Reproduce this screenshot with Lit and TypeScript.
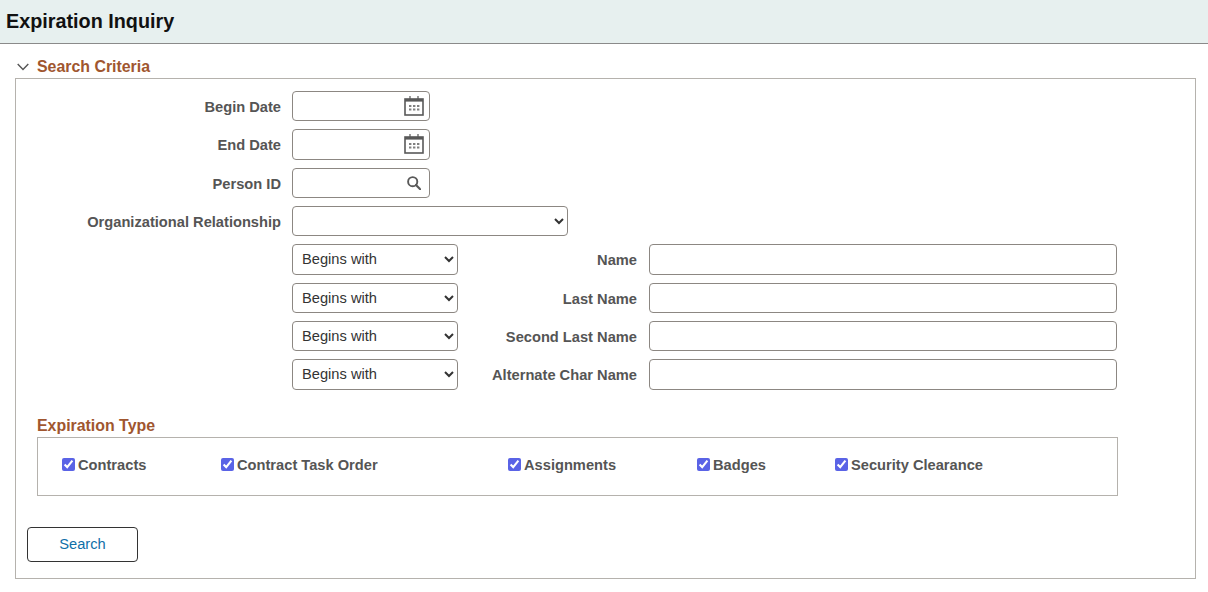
import { LitElement, html, css, svg } from 'lit';
import { customElement } from 'lit/decorators.js';

const calendarIcon = html`<svg class="icon" width="20" height="20" viewBox="0 0 20 20">
  <rect x="1" y="3" width="18" height="16" fill="none" stroke="#595959" stroke-width="1.6"></rect>
  <rect x="1" y="3" width="18" height="2.6" fill="#595959"></rect>
  <path d="M6 0v5M14 0v5" stroke="#595959" stroke-width="1.2"></path>
  ${[5, 9, 13].map((x) =>
    [9, 12.5].map((y) => svg`<rect x=${x} y=${y} width="2.4" height="2" fill="#808080"></rect>`)
  )}
</svg>`;

const searchIcon = html`<svg class="icon search" width="14" height="14" viewBox="0 0 14 14">
  <circle cx="5.7" cy="5.7" r="4.6" fill="none" stroke="#595959" stroke-width="1.9"></circle>
  <path d="M9 9l4.2 4.2" stroke="#595959" stroke-width="2.2" stroke-linecap="round"></path>
</svg>`;

const nameRows = ['Name', 'Last Name', 'Second Last Name', 'Alternate Char Name'];

const expirationTypes = [
  { label: 'Contracts', width: 159 },
  { label: 'Contract Task Order', width: 287 },
  { label: 'Assignments', width: 189 },
  { label: 'Badges', width: 138 },
  { label: 'Security Clearance', width: 200 },
];

@customElement('app-root')
export class AppRoot extends LitElement {
  static styles = css`
    :host {
      display: block;
      font-family: 'Liberation Sans', Arial, sans-serif;
      font-size: 14.67px;
      color: #555;
      background: #fff;
    }

    .page-header {
      box-sizing: border-box;
      height: 44px;
      background: #e7f0ef;
      border-bottom: 1px solid #8a8a8a;
      display: flex;
      align-items: center;
      padding-left: 6px;
    }

    .page-header h1 {
      margin: 0;
      font-size: 19.8px;
      font-weight: 700;
      color: #111;
    }

    .section {
      padding: 13px 12px 0 15px;
    }

    .section-title {
      display: flex;
      align-items: center;
      gap: 8px;
      height: 20px;
      padding-left: 2px;
      color: #a0562f;
      font-size: 15.9px;
      font-weight: 700;
    }

    .box {
      box-sizing: border-box;
      border: 1px solid #b5b2ad;
      height: 501px;
      padding-top: 12px;
      margin-top: 1px;
    }

    .form {
      display: grid;
      grid-template-columns: 276px 166px 191px 468px;
      grid-auto-rows: 30.33px;
      row-gap: 8px;
    }

    .label {
      grid-column: 1;
      font-weight: 700;
      text-align: right;
      align-self: center;
      padding: 2px 11px 0 0;
      white-space: nowrap;
    }

    .name-label {
      grid-column: 3;
      padding-right: 12px;
    }

    .control {
      box-sizing: border-box;
      height: 100%;
      border: 1px solid #8c8782;
      border-radius: 4px;
      background: #fff;
      font: inherit;
      color: #333;
    }

    .lookup {
      grid-column: 2 / 4;
      width: 138px;
      display: flex;
      align-items: center;
      justify-content: flex-end;
      padding-right: 5px;
    }

    .icon {
      display: block;
    }

    .icon.search {
      margin-right: 3px;
    }

    .wide {
      grid-column: 2 / 4;
      width: 276px;
      padding: 0 5px;
    }

    .op {
      grid-column: 2;
      width: 166px;
      padding: 0 5px;
    }

    .text {
      grid-column: 4;
      width: 468px;
      padding: 0 6px;
    }

    .subtitle {
      margin: 26px 0 0 21px;
      color: #a0562f;
      font-size: 15.9px;
      font-weight: 700;
      line-height: 20px;
    }

    .types {
      box-sizing: border-box;
      display: flex;
      height: 59px;
      width: 1081px;
      margin: 1px 0 0 21px;
      padding: 19px 0 0 24px;
      border: 1px solid #b5b2ad;
    }

    .type {
      display: flex;
      align-items: flex-start;
      gap: 3px;
      font-weight: 700;
      line-height: 16px;
    }

    .type input {
      width: 13px;
      height: 13px;
      margin: 1px 0 0 0;
      accent-color: #5a63e6;
    }

    .search-btn {
      display: block;
      width: 111px;
      height: 35px;
      margin: 31px 0 0 11px;
      border: 1px solid #333;
      border-radius: 4px;
      background: #fff;
      color: #0f6fa8;
      font: inherit;
    }
  `;

  render() {
    return html`
      <header class="page-header"><h1>Expiration Inquiry</h1></header>
      <section class="section">
        <div class="section-title">
          <svg width="12" height="8" viewBox="0 0 12 8">
            <path d="M.7 1l5.3 5.5L11.3 1" fill="none" stroke="#555" stroke-width="1.4"></path>
          </svg>
          Search Criteria
        </div>
        <div class="box">
          <div class="form">
            <div class="label">Begin Date</div>
            <div class="control lookup">${calendarIcon}</div>
            <div class="label">End Date</div>
            <div class="control lookup">${calendarIcon}</div>
            <div class="label">Person ID</div>
            <div class="control lookup">${searchIcon}</div>
            <div class="label">Organizational Relationship</div>
            <select class="control wide"><option></option></select>
            ${nameRows.map(
              (name) => html`
                <select class="control op"><option>Begins with</option></select>
                <div class="label name-label">${name}</div>
                <input class="control text" type="text" />
              `
            )}
          </div>
          <div class="subtitle">Expiration Type</div>
          <div class="types">
            ${expirationTypes.map(
              (t) => html`
                <label class="type" style="width:${t.width}px">
                  <input type="checkbox" checked />${t.label}
                </label>
              `
            )}
          </div>
          <button class="search-btn">Search</button>
        </div>
      </section>
    `;
  }
}
